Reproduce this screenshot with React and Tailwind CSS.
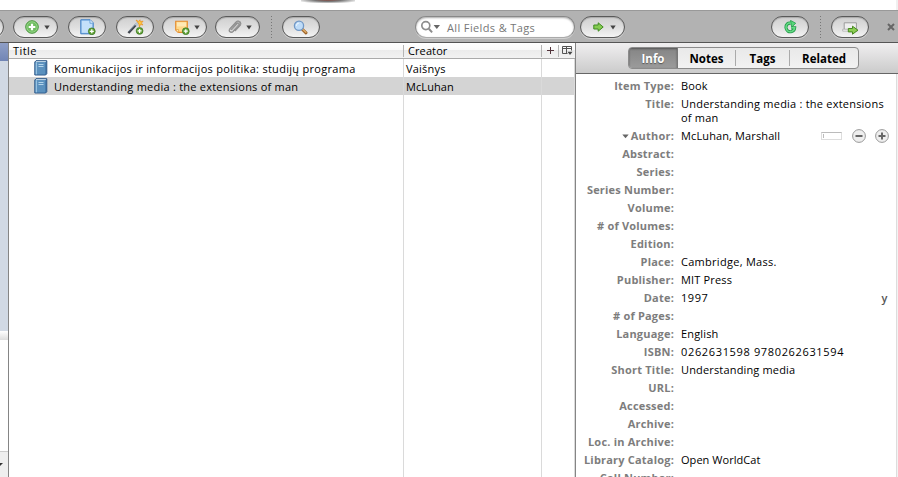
import React from 'react';
import clsx from 'clsx';

function Pill({ className, children }) {
  return (
    <button
      className={clsx(
        'flex h-[22px] shrink-0 items-center rounded-full border border-[#595959] bg-linear-to-b from-[#cfcfcf] via-[#dedede] to-[#f4f4f4] shadow-[0_1px_0_#cfcfcf,inset_0_1px_1px_#a9a9a9]',
        className,
      )}
    >
      {children}
    </button>
  );
}

function Caret({ className }) {
  return (
    <svg className={clsx('shrink-0', className)} width="6" height="5" viewBox="0 0 6 5">
      <path d="M0.3 0.5h5.4L3 4.6z" fill="#444" />
    </svg>
  );
}

function Badge({ x, y, r = 3.4 }) {
  return (
    <g transform={`translate(${x} ${y})`}>
      <circle r={r} fill="#63a337" stroke="#35731c" strokeWidth="0.7" />
      <path d="M-2 0h4M0-2v4" stroke="#fff" strokeWidth="1.3" />
    </g>
  );
}

function AddIcon() {
  return (
    <svg className="ml-[11px] shrink-0" width="14" height="14" viewBox="0 0 14 14">
      <circle cx="7" cy="7" r="6.3" fill="#6fbd60" stroke="#4c9640" strokeWidth="1" />
      <circle cx="7" cy="7" r="5.2" fill="none" stroke="#a4dc98" strokeWidth="0.7" />
      <path d="M7 3.7v6.6M3.7 7h6.6" stroke="#fff" strokeWidth="2.2" />
    </svg>
  );
}

function PageIcon() {
  return (
    <svg className="ml-[11px] shrink-0" width="16" height="16" viewBox="0 0 16 16">
      <path d="M.8.8h9.4l3 3v11H.8z" fill="#add2f5" stroke="#377ac4" />
      <path d="M2 2h7.5v3H12v8.5H2z" fill="#c4e0fa" />
      <path d="M10 .8v3.4h3.2" fill="#e8f4ff" stroke="#5b98d4" strokeWidth=".8" />
      <Badge x={11.8} y={12.3} />
    </svg>
  );
}

function WandIcon() {
  return (
    <svg className="ml-[10px] shrink-0" width="18" height="16" viewBox="0 0 18 16">
      <path d="M1.4 14L9.5 5.2" stroke="#3f444b" strokeWidth="2.4" />
      <path d="M2.2 12.2L8.6 5.3" stroke="#7c93aa" strokeWidth=".8" />
      <path d="M8.5 6.4L11 3.7" stroke="#b9c6d2" strokeWidth="2.7" />
      <path d="M9 1l2.5 1.4L13 .8l.3 1.8 2.8-.5-1.7 2L16 6l-2.5-.5L12.4 8l-.5-3z" fill="#ffc93b" stroke="#e78e22" strokeWidth=".7" />
      <Badge x={12.6} y={11.9} />
    </svg>
  );
}

function NoteIcon() {
  return (
    <svg className="ml-[12px] shrink-0" width="15" height="15" viewBox="0 0 15 15">
      <path d="M.7 1.2h11.6v11.2H3.2L.7 10z" fill="#ffd98a" stroke="#e58a2c" strokeWidth="1.1" />
      <path d="M2 2.4h9v4H2z" fill="#ffe9b5" />
      <path d="M.8 9.6h2.8v2.8" fill="#fff0b8" stroke="#e79b38" strokeWidth=".8" />
      <Badge x={10.8} y={11.2} />
    </svg>
  );
}

function ClipIcon() {
  return (
    <svg className="ml-[12px] shrink-0" width="14" height="14" viewBox="0 0 14 14" fill="none" strokeLinecap="round">
      <path d="M3.5 9.6l5.3-5.8c1.3-1.3 3 .1 1.9 1.4l-5.8 6.3c-1.9 1.9-4.8-.3-3-2.5L8 2.3c2.4-2.4 6.1.2 4 3L7.3 10.5" stroke="#808080" strokeWidth="1.4" />
      <path d="M3.5 9.6l5.3-5.8c1.3-1.3 3 .1 1.9 1.4l-5.8 6.3c-1.9 1.9-4.8-.3-3-2.5L8 2.3c2.4-2.4 6.1.2 4 3L7.3 10.5" stroke="#b5b5b5" strokeWidth=".5" />
    </svg>
  );
}

function MagnifierIcon() {
  return (
    <svg className="ml-[10px] shrink-0" width="15" height="15" viewBox="0 0 15 15">
      <path d="M9 9l4 3.8" stroke="#9c6227" strokeWidth="3" strokeLinecap="round" />
      <path d="M9.6 9.2l3.3 3" stroke="#e4af68" strokeWidth="1.3" strokeLinecap="round" />
      <circle cx="6" cy="5.8" r="4.6" fill="#bfdcf8" stroke="#7198c6" strokeWidth="1.3" />
      <path d="M3.4 5.8a2.7 2.7 0 0 1 2.5-2.7" fill="none" stroke="#edf7ff" />
    </svg>
  );
}

function ArrowIcon({ className }) {
  return (
    <svg className={className} width="11" height="10" viewBox="0 0 11 10">
      <path d="M.8 3h4.4V.8L10.2 5 5.2 9.2V7H.8z" fill="#85cb52" stroke="#3f8b20" />
    </svg>
  );
}

function RefreshIcon() {
  return (
    <svg className="ml-[12px] shrink-0" width="13" height="14" viewBox="0 0 13 14">
      <path d="M7 3.2C4 2.4 1.8 4.7 2 7.7c.3 3.2 3 4.6 5.6 3.8 1.8-.6 2.9-2 3-3.7H7.3" fill="none" stroke="#239b4a" strokeWidth="3.2" />
      <path d="M6.5.4l5.2 2.8-4 4z" fill="#58d77a" stroke="#239b4a" strokeWidth=".8" />
      <path d="M7 3.2C4 2.4 1.8 4.7 2 7.7c.3 3.2 3 4.6 5.6 3.8 1.8-.6 2.9-2 3-3.7H7.3" fill="none" stroke="#66da85" strokeWidth="1.6" />
    </svg>
  );
}

function LocateIcon() {
  return (
    <svg className="ml-[10px] mt-[2px] shrink-0" width="17" height="13" viewBox="0 0 17 13">
      <path d="M2.2.8h12.2v6.7H2.2z" fill="#eee" stroke="#9a9a9a" />
      <path d="M.7 7.2h14.8v1.9H.7z" fill="#fafafa" stroke="#a5a5a5" strokeWidth=".7" />
      <path d="M6.3 6.5h4.2V4.2l5.4 4-5.4 4V9.9H6.3z" fill="#8cce53" stroke="#46891f" />
    </svg>
  );
}

function BookIcon() {
  return (
    <svg className="shrink-0" width="14" height="16" viewBox="0 0 14 16">
      <path d="M.8 2L2 .7h10.8v13L11.6 15H.8z" fill="#4479a9" stroke="#315b8b" />
      <path d="M1.4 2.2h9.7v12.2H1.4z" fill="#5b91be" />
      <path d="M2.3 2.3v12" stroke="#b1d6ee" strokeWidth=".9" />
      <path d="M2 1.6h9.9" stroke="#d4e5f1" strokeWidth=".9" />
      <path d="M4.5 4.5h5M4.5 6.5h5" stroke="#cbe4f5" strokeWidth=".8" />
    </svg>
  );
}

function Separator({ className }) {
  return <div className={clsx('h-[22px] w-px shrink-0 bg-[repeating-linear-gradient(to_bottom,#777_0_1px,#b2b2b2_1px_3px)]', className)} />;
}

function Toolbar() {
  return (
    <div className="flex h-[33px] shrink-0 items-center overflow-hidden border-t border-b border-t-[#999] border-b-[#555] bg-[#b2b2b2] pt-px">
      <Pill className="-ml-[34px] w-[38px]" />
      <Pill className="ml-[9px] w-[45px]"><AddIcon /><Caret className="ml-[5px]" /></Pill>
      <Pill className="ml-[10px] w-[38px]"><PageIcon /></Pill>
      <Pill className="ml-[10px] w-[38px]"><WandIcon /></Pill>
      <Pill className="ml-[8px] w-[45px]"><NoteIcon /><Caret className="ml-[4px]" /></Pill>
      <Pill className="ml-[8px] w-[45px]"><ClipIcon /><Caret className="ml-[4px]" /></Pill>
      <Separator className="ml-[11px]" />
      <Pill className="ml-[10px] w-[38px]"><MagnifierIcon /></Pill>
      <div className="ml-[95px] flex h-[22px] w-[160px] shrink-0 items-center rounded-full border border-[#888] border-b-[#aaa] bg-white shadow-[inset_0_1px_2px_#aaa,0_1px_0_#d0d0d0]">
        <svg className="ml-[4px] shrink-0" width="21" height="14" viewBox="0 0 21 14">
          <circle cx="5.8" cy="5.6" r="4" fill="none" stroke="#8d8d8d" strokeWidth="1.7" />
          <path d="M8.8 8.8l3.3 3.6" stroke="#8d8d8d" strokeWidth="2" />
          <path d="M13.6 5h6.4l-3.2 4z" fill="#666" />
        </svg>
        <span className="ml-[6px] pt-px text-[11px] tracking-[0.37px] text-[#777]">All Fields &amp; Tags</span>
      </div>
      <Pill className="ml-[5px] w-[45px]"><ArrowIcon className="ml-[12px] shrink-0" /><Caret className="ml-[6px]" /></Pill>
      <Pill className="ml-[146px] w-[38px]"><RefreshIcon /></Pill>
      <Separator className="ml-[11px]" />
      <Pill className="ml-[10px] w-[38px]"><LocateIcon /></Pill>
      <svg className="ml-[18px] shrink-0" width="8" height="8" viewBox="0 0 8 8">
        <path d="M1 1l6 6M7 1L1 7" stroke="#666" strokeWidth="2" />
      </svg>
    </div>
  );
}

const items = [
  {
    title: 'Komunikacijos ir informacijos politika: studijų programa',
    titleTracking: 'tracking-[0.29px]',
    creator: 'Vaišnys',
    creatorTracking: 'tracking-[0.2px]',
  },
  {
    title: 'Understanding media : the extensions of man',
    titleTracking: 'tracking-[0.24px]',
    creator: 'McLuhan',
    creatorTracking: 'tracking-[0.08px]',
    selected: true,
  },
];

function ItemList() {
  return (
    <div className="flex w-[566px] shrink-0 flex-col bg-white">
      <div className="flex h-4 shrink-0 items-center border-b border-[#aaa] bg-[linear-gradient(#fff_0%,#fafafa_45%,#ebebeb_46%,#f2f2f2_100%)]">
        <div className="w-[394px] pt-px pl-[4px] tracking-[0.4px]">Title</div>
        <div className="h-3 w-px bg-[#b5b5b5]" />
        <div className="w-[137px] pt-px pl-[4px] tracking-[0.1px]">Creator</div>
        <div className="h-3 w-px bg-[#b5b5b5]" />
        <svg className="ml-[5px]" width="7" height="7" viewBox="0 0 7 7">
          <path d="M3.5 0v7M0 3.5h7" stroke="#53343b" strokeWidth="1" />
        </svg>
        <div className="ml-[4px] h-3 w-px bg-[#b5b5b5]" />
        <svg className="ml-[3px]" width="11" height="10" viewBox="0 0 11 10" fill="none" stroke="#555">
          <path d="M9.5 4.5v-4h-9v7h5M.5 2.5h9M4.5 .5v7" strokeWidth="1" />
          <path d="M5.5 5.7h5L8 9z" fill="#444" stroke="none" />
        </svg>
      </div>
      {items.map((item) => (
        <div key={item.creator} className={clsx('flex h-[18px] shrink-0 items-center', item.selected && 'bg-[#d4d4d4]')}>
          <div className="flex h-full w-[394px] items-center pl-[25px]">
            <BookIcon />
            <span className={clsx('ml-[6px] pt-[2px] whitespace-nowrap', item.titleTracking)}>{item.title}</span>
          </div>
          <div className="h-full w-px bg-[#dadada]" />
          <div className={clsx('w-[137px] pt-[2px] pl-[2px]', item.creatorTracking)}>{item.creator}</div>
          <div className="h-full w-px bg-[#dadada]" />
          <div className="ml-auto h-full w-px bg-[#dadada]" />
        </div>
      ))}
      <div className="flex grow">
        <div className="ml-[394px] w-px bg-[#dadada]" />
        <div className="ml-[137px] w-px bg-[#dadada]" />
        <div className="ml-auto w-px bg-[#dadada]" />
      </div>
    </div>
  );
}

const fields = [
  ['Item Type', 'Book'],
  ['Title', 'Understanding media : the extensions of man'],
  ['Author', 'McLuhan, Marshall'],
  ['Abstract', ''],
  ['Series', ''],
  ['Series Number', ''],
  ['Volume', ''],
  ['# of Volumes', ''],
  ['Edition', ''],
  ['Place', 'Cambridge, Mass.'],
  ['Publisher', 'MIT Press'],
  ['Date', '1997'],
  ['# of Pages', ''],
  ['Language', 'English'],
  ['ISBN', '0262631598 9780262631594'],
  ['Short Title', 'Understanding media'],
  ['URL', ''],
  ['Accessed', ''],
  ['Archive', ''],
  ['Loc. in Archive', ''],
  ['Library Catalog', 'Open WorldCat'],
  ['Call Number', ''],
];

const valueTracking = {
  Title: 'tracking-[0.22px]',
  Author: 'tracking-[0.12px]',
  Place: 'tracking-[0.28px]',
  Date: 'tracking-[0.55px]',
  ISBN: 'tracking-[0.65px]',
  'Library Catalog': 'tracking-[0.05px]',
};

function RoundButton({ plus, className }) {
  return (
    <svg className={clsx('shrink-0', className)} width="14" height="14" viewBox="0 0 14 14">
      <circle cx="7" cy="7" r="6.4" fill="#eee" stroke="#999" />
      <path d={plus ? 'M3.5 7h7M7 3.5v7' : 'M3.5 7h7'} stroke="#666" strokeWidth="2" />
    </svg>
  );
}

function InfoPane() {
  return (
    <div className="flex w-[319px] shrink-0 flex-col bg-white">
      <div className="flex h-[31px] shrink-0 items-start border-b border-[#666] bg-linear-to-b from-[#f0eff0] to-[#cbcbcb] pt-[4px]">
        <div className="ml-[52px] flex h-[22px] w-[231px] overflow-hidden rounded-[4px] border border-[#8b8b8b] bg-linear-to-b from-[#e9e9e9] to-[#f2f2f2] text-[11.5px] leading-[21px] font-bold">
          <div className="w-[49px] border-r border-[#777] bg-linear-to-b from-[#858585] to-[#9b9b9b] text-center text-white shadow-[inset_0_1px_2px_#555] [text-shadow:0_1px_1px_#555]">Info</div>
          <div className="w-[57px] text-center">Notes</div>
          <div className="mt-[2px] h-4 w-px bg-[#aaa]" />
          <div className="w-[53px] text-center">Tags</div>
          <div className="mt-[2px] h-4 w-px bg-[#aaa]" />
          <div className="w-[68px] text-center">Related</div>
        </div>
      </div>
      <div className="flex flex-col overflow-hidden pt-[3px] leading-[14px]">
        {fields.map(([label, value]) => (
          <div key={label} className="flex shrink-0 py-[2px]">
            <div className="flex h-[14px] w-[98px] items-center justify-end font-bold tracking-[0.2px] whitespace-nowrap text-[#7d7d7d]">
              {label === 'Author' && (
                <svg className="mr-[2px]" width="7" height="5" viewBox="0 0 7 5"><path d="M.3.5h6.4L3.5 4.3z" fill="#666" /></svg>
              )}
              {label}:
            </div>
            <div className={clsx('ml-[7px] w-[208px]', valueTracking[label] || 'tracking-[0.16px]')}>
              {label === 'Author' ? (
                <div className="flex h-[14px] items-center">
                  <span className="w-[140px] shrink-0">{value}</span>
                  <div className="h-[8px] w-[21px] shrink-0 border border-[#ddd] border-t-[#bbb] p-px"><div className="h-1 w-px bg-[#bbb]" /></div>
                  <RoundButton className="ml-[10px]" />
                  <RoundButton plus className="ml-[9px]" />
                </div>
              ) : label === 'Date' ? (
                <div className="flex justify-between pr-px"><span>{value}</span><span className="font-semibold text-[#555]">y</span></div>
              ) : value}
            </div>
          </div>
        ))}
      </div>
    </div>
  );
}

export default function App() {
  return (
    <div className="flex h-[477px] w-[898px] flex-col overflow-hidden bg-white font-['Open_Sans','Noto_Sans',sans-serif] text-[11px] leading-[14px] text-black">
      <div className="flex h-[10px] shrink-0">
        <div className="ml-[301px] h-[3px] w-[54px] bg-[radial-gradient(ellipse_at_50%_0,#854a42_0%,#777_35%,#bbb_60%,#fff_85%)]" />
        <div className="ml-auto w-[2px] bg-[#f0f0f0]" />
      </div>
      <Toolbar />
      <div className="flex min-h-0 grow">
        <div className="flex w-2 shrink-0 flex-col bg-white">
          <div className="h-[18px] bg-linear-to-b from-[#8f9fc6] to-[#7185b5]" />
          <div className="h-[270px] bg-[#d1d9e4]" />
          <div className="h-[9px] bg-linear-to-b from-white to-[#ddd]" />
          <div className="grow" />
          <div className="flex h-[26px] items-center border-t border-[#ccc] bg-[#efefef]">
            <svg width="3" height="4" viewBox="0 0 3 4"><path d="M0 0h3L0 3z" fill="#333" /></svg>
          </div>
        </div>
        <div className="w-px shrink-0 bg-[#858585]" />
        <ItemList />
        <div className="w-px shrink-0 bg-[#858585]" />
        <InfoPane />
        <div className="flex w-[3px] shrink-0 flex-col">
          <div className="h-[31px] shrink-0 border-b border-[#666] bg-linear-to-b from-[#f0eff0] to-[#cbcbcb]" />
          <div className="ml-px grow border-l border-[#ddd] bg-[#f3f3f3]" />
        </div>
      </div>
    </div>
  );
}
